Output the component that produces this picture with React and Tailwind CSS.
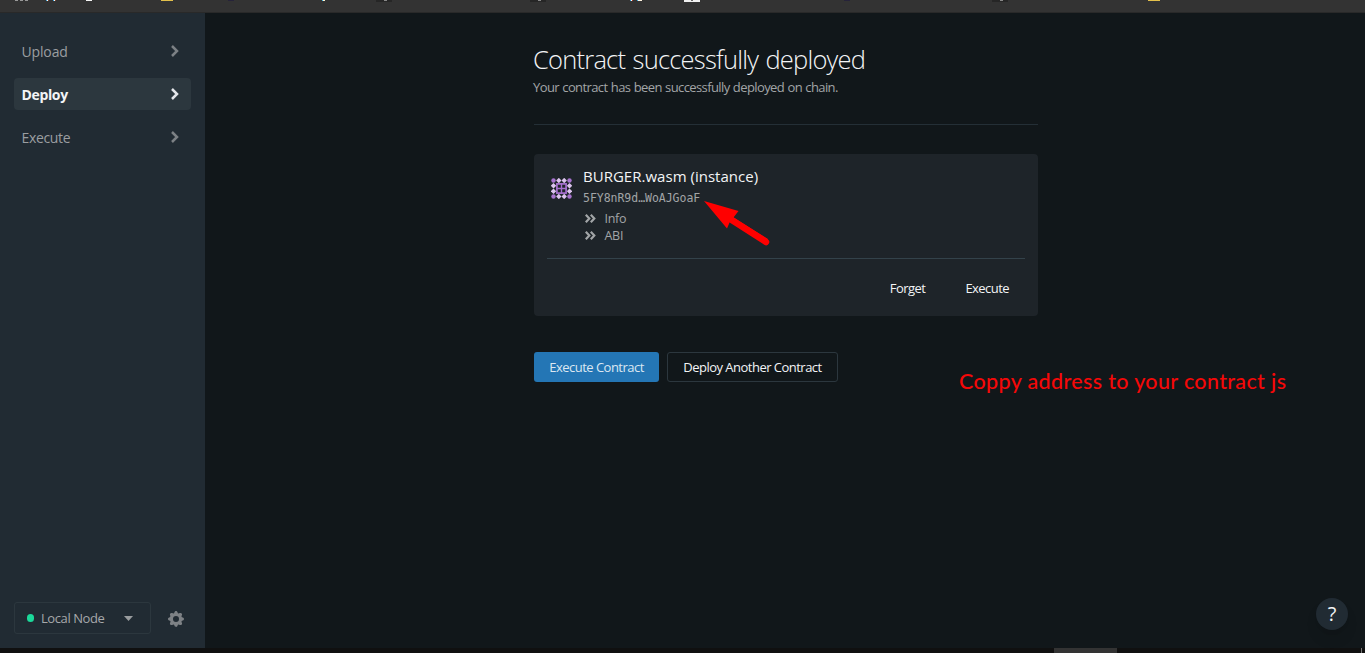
import React from 'react';

const NAV = [
  { label: 'Upload', cls: 'tracking-[-0.15px]' },
  { label: 'Deploy', active: true, cls: 'tracking-[-0.35px]' },
  { label: 'Execute', cls: 'tracking-[-0.35px]' },
];

function Chevron() {
  return (
    <svg width="9" height="12" viewBox="0 0 9 12" fill="none" stroke="currentColor" strokeWidth="2.5">
      <path d="M1 1 6 6 1 11" />
    </svg>
  );
}

function DoubleChevron() {
  return (
    <svg width="11" height="9" viewBox="0 0 11 9" fill="none" stroke="currentColor" strokeWidth="2.2">
      <path d="M.8.8 4.3 4.5.8 8.2M5.8.8 9.3 4.5 5.8 8.2" />
    </svg>
  );
}

// Favicon slivers of the browser's bookmarks bar: [left, width, height, colour]
const MARKS = [
  [15, 3, 1, '#999'], [20, 3, 1, '#999'], [25, 3, 1, '#999'],
  [46, 1, 1, '#39a9e0'], [47, 1, 1, '#fff'], [48, 1, 1, '#8a4a35'],
  [53, 1, 1, '#39a9e0'], [54, 1, 1, '#fff'], [55, 1, 1, '#8a4a35'],
  [86, 6, 1, '#f5f5f5'], [161, 12, 1, '#e3c04b'], [228, 6, 1, '#26233a'],
  [322, 1, 1, '#39c0f0'], [323, 2, 1, '#fff3d0'],
  [376, 16, 2, '#262626'], [384, 3, 1, '#888'],
  [530, 16, 2, '#262626'], [538, 3, 1, '#888'],
  [630, 1, 1, '#39a9e0'], [631, 1, 1, '#fff'], [632, 1, 1, '#b33c2a'],
  [637, 1, 1, '#39a9e0'], [638, 4, 1, '#fff3e0'],
  [684, 16, 2, '#f0f0f0'], [691, 2, 1, '#666'],
  [844, 6, 1, '#26233a'], [992, 16, 2, '#262626'], [1000, 3, 1, '#888'],
  [1148, 12, 1, '#e3c04b'],
];

function Identicon() {
  const at = [2.5, 7.8, 13.2, 18.5];
  const dots = [];
  at.forEach((x, i) =>
    at.forEach((y, j) => {
      const edgeX = i === 0 || i === 3;
      const edgeY = j === 0 || j === 3;
      if (edgeX && edgeY) dots.push(<circle key={`${i}${j}`} cx={x} cy={y} r="2.2" fill="#a874cf" />);
      else if (edgeX || edgeY)
        dots.push(<path key={`${i}${j}`} d={`M${x} ${y - 2.7}l2.7 2.7-2.7 2.7-2.7-2.7z`} fill="#dcc4ee" />);
    })
  );
  return (
    <svg width="21" height="21" viewBox="0 0 21 21">
      {dots}
      <rect x="5.9" y="5.9" width="9.2" height="9.2" fill="#1e2429" stroke="#a66fce" strokeWidth="1.7" />
      <path d="M10.5 5v11M5 10.5h11" stroke="#a66fce" strokeWidth="1.4" />
    </svg>
  );
}

export default function App() {
  return (
    <div className="relative flex h-[653px] w-[1365px] flex-col overflow-hidden bg-[#11171a] font-['Open_Sans',sans-serif] text-[13px] text-gray-100">
      <header className="h-[13px] shrink-0 border-b border-[#292929] bg-[#333333]">
        <svg className="block" width="1365" height="3" shapeRendering="crispEdges">
          {MARKS.map(([x, w, h, c]) => (
            <rect key={x} x={x} y="0" width={w} height={h} fill={c} />
          ))}
        </svg>
      </header>

      <div className="flex min-h-0 flex-1">
        <aside className="flex w-[205px] shrink-0 flex-col justify-between bg-[#212b33] px-3.5 pt-[22px] pb-3.5">
          <nav className="flex flex-col gap-[11px]">
            {NAV.map(({ label, active, cls }) => (
              <a
                key={label}
                className={
                  active
                    ? 'flex h-8 w-[177px] items-center justify-between rounded bg-[#2c373e] pr-[11px] pl-[7.5px] font-bold text-gray-100'
                    : 'flex h-8 w-[177px] items-center justify-between rounded pr-[11px] pl-[7.5px] text-[#9b9ea1]'
                }
              >
                <span className={`pt-[2px] text-[14px] leading-5 ${cls}`}>{label}</span>
                <span className={active ? 'text-gray-200' : 'text-[#7c8185]'}>
                  <Chevron />
                </span>
              </a>
            ))}
          </nav>
          <div className="flex items-center">
            <div className="flex h-8 w-[137px] items-center rounded-[3px] border border-[#2c373e] pl-3 text-[#a6a8aa]">
              <span className="h-2 w-[7px] rounded-full bg-[#1bd99a]" />
              <span className="ml-[7px] w-[83px] pt-px text-[13px] tracking-[-0.42px]">Local Node</span>
              <svg width="9" height="5" viewBox="0 0 9 5" fill="#999c9e">
                <path d="M0 0h9L4.5 5z" />
              </svg>
            </div>
            <svg className="mt-px ml-[15px]" width="20" height="20" viewBox="0 0 20 20" fill="#7d8185">
              <path
                fillRule="evenodd"
                clipRule="evenodd"
                d="M11.49 3.17c-.38-1.56-2.6-1.56-2.98 0a1.532 1.532 0 01-2.286.948c-1.372-.836-2.942.734-2.106 2.106.54.886.061 2.042-.947 2.287-1.561.379-1.561 2.6 0 2.978a1.532 1.532 0 01.947 2.287c-.836 1.372.734 2.942 2.106 2.106a1.532 1.532 0 012.287.947c.379 1.561 2.6 1.561 2.978 0a1.533 1.533 0 012.287-.947c1.372.836 2.942-.734 2.106-2.106a1.533 1.533 0 01.947-2.287c1.561-.379 1.561-2.6 0-2.978a1.532 1.532 0 01-.947-2.287c.836-1.372-.734-2.942-2.106-2.106a1.532 1.532 0 01-2.287-.947zM10 13a3 3 0 100-6 3 3 0 000 6z"
              />
            </svg>
          </div>
        </aside>

        <main className="w-[833px] pl-[329px]">
          <h1 className="-ml-px mt-[30px] h-8 text-[25.5px] leading-8 font-light tracking-[-0.78px] [word-spacing:1.5px] whitespace-nowrap text-gray-100">
            Contract successfully deployed
          </h1>
          <p className="-ml-px mt-[2px] h-5 text-[13px] leading-5 tracking-[-0.6px] [word-spacing:0.5px] whitespace-nowrap text-[#a2a5a7]">
            Your contract has been successfully deployed on chain.
          </p>
          <hr className="mt-[27px] border-[#242f36]" />

          <section className="mt-[29px] flex h-[162px] flex-col rounded bg-[#1e2429] px-[13px]">
            <div className="flex h-[104px] pt-[11px]">
              <div className="w-9 pt-[13px] pl-[3.5px]">
                <Identicon />
              </div>
              <div className="flex flex-col whitespace-nowrap">
                <span className="h-[23px] text-[15px] leading-[22px] tracking-[0.02px]">BURGER.wasm (instance)</span>
                <span className="mb-px h-[21px] font-['DejaVu_Sans_Mono',monospace] text-[11.5px] leading-[21px] tracking-[-0.03px] text-[#a2a5a7]">
                  5FY8nR9d…WoAJGoaF
                </span>
                {['Info', 'ABI'].map((t) => (
                  <span key={t} className="flex h-[17px] items-center pl-[1.5px] text-[12.5px] leading-[17px] tracking-[-0.3px] text-[#a2a5a7]">
                    <DoubleChevron />
                    <span className="ml-[9px]">{t}</span>
                  </span>
                ))}
              </div>
            </div>
            <div className="flex flex-1 justify-end gap-10 border-t border-[#33424a] pt-[19px] pr-4 text-[13px] leading-5 tracking-[-0.55px]">
              <button className="h-5">Forget</button>
              <button className="h-5">Execute</button>
            </div>
          </section>

          <div className="mt-9 flex gap-2 text-[13px] tracking-[-0.52px] whitespace-nowrap">
            <button className="h-[30px] w-[125px] rounded-[3px] bg-[#2476b5] pt-px text-[#dbe7f2]">Execute Contract</button>
            <button className="h-[30px] w-[171px] rounded-[3px] border border-[#2c373e] pt-px">Deploy Another Contract</button>
          </div>
        </main>
      </div>

      <footer className="flex h-[5px] shrink-0 bg-[#101010]">
        <div className="ml-[1054px] w-[63px] bg-[#333333]" />
        <div className="ml-[244px] w-px bg-[#777777]" />
      </footer>

      <svg className="absolute top-[196px] left-[700px]" width="74" height="54" viewBox="700 196 74 54">
        <path d="M704 201 738.5 211 733.5 217.5 768 239 765 244 730 221.500 727 228.500Z" fill="#ff0000" />
        <path d="M731 219.500 766 242" stroke="#ff0000" strokeWidth="6.500" strokeLinecap="round" />
      </svg>
      <span className="absolute top-[367px] left-[959px] font-[Lato,sans-serif] text-[21.5px] leading-7 font-medium tracking-[0.36px] whitespace-nowrap text-[#f50808]">
        Coppy address to your contract js
      </span>
      <button className="absolute top-[598px] left-[1316px] flex h-8 w-8 items-center justify-center rounded-full bg-[#212b33] text-[20px] leading-none font-medium text-gray-100 shadow-lg">
        ?
      </button>
    </div>
  );
}
